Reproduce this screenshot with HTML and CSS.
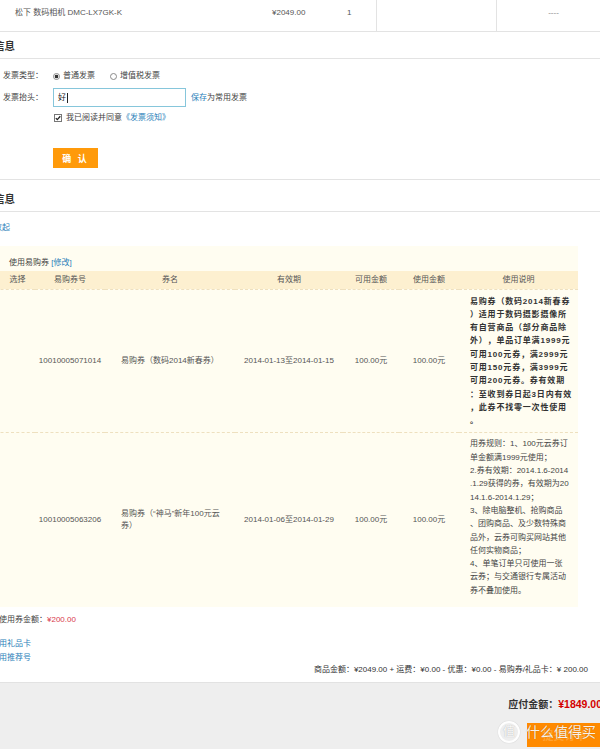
FILE: index.html
```html
<!DOCTYPE html>
<html lang="zh-CN">
<head>
    <meta charset="UTF-8">
    <meta name="viewport" content="width=device-width, initial-scale=1.0">
    <title>核对订单信息</title>
    <link rel="stylesheet" href="styles.css">
</head>
<body>
<div class="page">
    <!-- 商品行 -->
    <div class="goods-row">
        <div class="g-name">松下 数码相机 DMC-LX7GK-K</div>
        <div class="g-price">¥2049.00</div>
        <div class="g-qty">1</div>
        <div class="g-blank"></div>
        <div class="g-extra">----</div>
    </div>

    <!-- 发票信息 -->
    <h2 class="section-title">发票信息</h2>
    <div class="invoice">
        <div class="form-row">
            <span class="form-label">发票类型：</span>
            <span class="radio checked"></span><span class="radio-text">普通发票</span>
            <span class="radio"></span><span class="radio-text">增值税发票</span>
        </div>
        <div class="form-row row-title">
            <span class="form-label">发票抬头：</span>
            <span class="text-input">好<i class="caret"></i></span>
            <span class="save-tip"><a href="#">保存</a>为常用发票</span>
        </div>
        <div class="form-row row-agree">
            <span class="checkbox">
                <svg width="8" height="8" viewBox="0 0 8 8"><rect x="0.5" y="0.5" width="7" height="7" fill="#fff" stroke="#777"/><path d="M1.8 4.1 L3.3 5.6 L6.3 2.2" fill="none" stroke="#222" stroke-width="1.3"/></svg>
            </span>
            我已阅读并同意<a href="#">《发票须知》</a>
        </div>
        <button class="btn-confirm">确 认</button>
    </div>

    <!-- 优惠信息 -->
    <h2 class="section-title second">优惠信息</h2>
    <a href="#" class="toggle">收起</a>

    <div class="coupon-box">
        <div class="coupon-head">使用易购券 <a href="#">[修改]</a></div>
        <table class="coupon-table">
            <colgroup>
                <col style="width:45px"><col style="width:70px"><col style="width:130px"><col style="width:108px"><col style="width:56px"><col style="width:60px"><col style="width:119px">
            </colgroup>
            <thead>
                <tr>
                    <th class="pick">选择</th>
                    <th>易购券号</th>
                    <th>券名</th>
                    <th>有效期</th>
                    <th>可用金额</th>
                    <th>使用金额</th>
                    <th>使用说明</th>
                </tr>
            </thead>
            <tbody>
                <tr>
                    <td></td>
                    <td>10010005071014</td>
                    <td class="name">易购券（数码2014新春券）</td>
                    <td>2014-01-13至2014-01-15</td>
                    <td>100.00元</td>
                    <td>100.00元</td>
                    <td class="desc bold">易购券（数码2014新春券<br>）适用于数码摄影摄像所<br>有自营商品（部分商品除<br>外），单品订单满1999元<br>可用100元券，满2999元<br>可用150元券，满3999元<br>可用200元券。券有效期<br>：至收到券日起3日内有效<br>，此券不找零一次性使用<br>。</td>
                </tr>
                <tr>
                    <td></td>
                    <td>10010005063206</td>
                    <td class="name">易购券（“神马”新年100元云券）</td>
                    <td>2014-01-06至2014-01-29</td>
                    <td>100.00元</td>
                    <td>100.00元</td>
                    <td class="desc last">用券规则：1、100元云券订<br>单金额满1999元使用；<br>2.券有效期：2014.1.6-2014<br>.1.29获得的券，有效期为20<br>14.1.6-2014.1.29；<br>3、除电脑整机、抢购商品<br>、团购商品、及少数特殊商<br>品外，云券可购买网站其他<br>任何实物商品；<br>4、单笔订单只可使用一张<br>云券；与交通银行专属活动<br>券不叠加使用。</td>
                </tr>
            </tbody>
        </table>
    </div>

    <div class="coupon-sum">使用券金额：<span class="red">¥200.00</span></div>
    <div class="extra-links">
        <a href="#">使用礼品卡</a>
        <a href="#">使用推荐号</a>
    </div>
    <div class="order-total">商品金额：¥2049.00 + 运费：¥0.00 - 优惠：¥0.00 - 易购券/礼品卡：¥ 200.00</div>

    <!-- 应付金额 -->
    <div class="pay-bar">
        <div class="pay-total">应付金额：<span class="pay-amount">¥1849.00</span></div>
        <button class="btn-submit">提交订单</button>
        <div class="watermark"><span class="wm-circle">值</span><span class="wm-text">什么值得买</span></div>
    </div>
</div>
</body>
</html>
```

FILE: styles.css
```css
* {
    box-sizing: border-box;
}

html, body {
    margin: 0;
    padding: 0;
    overflow: hidden;
}

body {
    background-color: #fff;
    color: #444;
    font-family: "Liberation Sans", "Noto Sans CJK SC", sans-serif;
    font-size: 8px;
    line-height: 1.25;
}

a {
    color: #2a80b9;
    text-decoration: none;
}

.page {
    width: 680px;
    margin-left: -40px;
}

/* 商品行 */
.goods-row {
    display: flex;
    height: 32px;
    line-height: 26px;
    border-bottom: 1px solid #e3e3e3;
    color: #555;
}

.g-name {
    width: 312px;
    padding-left: 55px;
}

.g-price {
    width: 75px;
}

.g-qty {
    width: 29px;
}

.g-blank {
    width: 120px;
    border-left: 1px solid #e3e3e3;
}

.g-extra {
    width: 114px;
    border-left: 1px solid #e3e3e3;
    text-align: center;
    color: #888;
}

/* 标题 */
.section-title {
    margin: 0;
    padding: 7px 0 5px 13px;
    font-size: 10.5px;
    line-height: 14px;
    font-weight: bold;
    color: #333;
    border-bottom: 1px solid #e3e3e3;
}

.section-title.second {
    margin-top: 5px;
}

/* 发票 */
.invoice {
    padding: 10px 0 11px 43px;
    border-bottom: 1px solid #e3e3e3;
}

.form-row {
    display: flex;
    align-items: center;
    height: 14px;
    color: #444;
}

.form-label {
    width: 50px;
}

.radio {
    width: 7px;
    height: 7px;
    margin-right: 3px;
    border: 1px solid #8a8a8a;
    border-radius: 50%;
    background: #fff;
}

.radio.checked {
    background: radial-gradient(circle, #333 0 1.6px, #fff 2.1px);
}

.radio-text {
    margin-right: 15px;
}

.row-title {
    height: 19px;
    margin-top: 5px;
}

.text-input {
    display: flex;
    align-items: center;
    width: 133px;
    height: 19px;
    padding-left: 4px;
    border: 1px solid #86c6db;
    background: #fff;
    color: #222;
}

.caret {
    display: inline-block;
    width: 1px;
    height: 10px;
    margin-left: 1px;
    background: #222;
}

.save-tip {
    margin-left: 5px;
}

.row-agree {
    height: 12px;
    margin-top: 5px;
    padding-left: 51px;
}

.checkbox {
    display: flex;
    margin-right: 4px;
}

.btn-confirm {
    display: block;
    width: 45px;
    height: 20px;
    margin: 24px 0 0 50px;
    padding: 0;
    border: none;
    background-color: #ff9a0a;
    color: #fff;
    font-family: inherit;
    font-size: 9px;
    font-weight: bold;
    letter-spacing: 2px;
}

.toggle {
    display: block;
    margin: 10px 0 0 34px;
    line-height: 12px;
}

/* 易购券 */
.coupon-box {
    width: 588px;
    margin: 12px 0 0 30px;
    background-color: #fffdf1;
}

.coupon-head {
    padding: 12px 0 3px 19px;
    line-height: 10px;
    color: #444;
}

.coupon-table {
    width: 100%;
    border-collapse: collapse;
    table-layout: fixed;
}

.coupon-table th {
    height: 18px;
    padding: 0;
    background-color: #fdf0d0;
    font-weight: normal;
    color: #555;
}

.coupon-table th.pick {
    padding-left: 10px;
}

.coupon-table td {
    padding: 0;
    border-top: 1px dashed #eee0bf;
    text-align: center;
    vertical-align: middle;
    color: #555;
}

.coupon-table td.name {
    padding: 0 13px 0 16px;
    text-align: left;
    line-height: 12px;
}

.coupon-table td.desc {
    padding: 5px 1px 5px 11px;
    text-align: left;
    white-space: nowrap;
    line-height: 13.3px;
    color: #444;
}

.coupon-table td.bold {
    font-weight: bold;
    letter-spacing: 0.8px;
    color: #333;
}

.coupon-table td.last {
    padding: 4px 1px 10px 11px;
}

.coupon-sum {
    margin: 8px 0 0 39px;
    line-height: 10px;
}

.red {
    color: #d93a4e;
}

.extra-links {
    margin: 12px 0 0 31px;
}

.extra-links a {
    display: block;
    line-height: 14px;
}

.order-total {
    padding-right: 52px;
    line-height: 10px;
    text-align: right;
    color: #333;
}

/* 应付金额 */
.pay-bar {
    position: relative;
    height: 80px;
    margin-top: 7px;
    padding: 15px 38px 0 0;
    border-top: 1px solid #e2e2e2;
    background-color: #eee;
    text-align: right;
}

.pay-total {
    font-size: 10px;
    line-height: 12px;
    font-weight: bold;
    color: #333;
}

.pay-amount {
    font-size: 10.5px;
    color: #d40000;
}

.btn-submit {
    width: 75px;
    height: 24px;
    margin-top: 12px;
    padding: 0;
    border: none;
    background-color: #ff8a00;
    color: #ffa231;
    font-family: inherit;
    font-size: 11px;
    font-weight: bold;
}

.watermark {
    position: absolute;
    left: 538px;
    top: 38px;
    display: flex;
    align-items: center;
    gap: 6px;
    color: rgba(255, 255, 255, 0.92);
    text-shadow: 0 0 1px rgba(0, 0, 0, 0.3);
}

.wm-circle {
    display: flex;
    align-items: center;
    justify-content: center;
    width: 22px;
    height: 22px;
    border: 2px solid rgba(255, 255, 255, 0.92);
    border-radius: 50%;
    font-size: 12px;
    box-shadow: 0 0 1px rgba(0, 0, 0, 0.25);
}

.wm-text {
    font-size: 14px;
    font-family: "Noto Sans CJK SC", sans-serif;
}
```
